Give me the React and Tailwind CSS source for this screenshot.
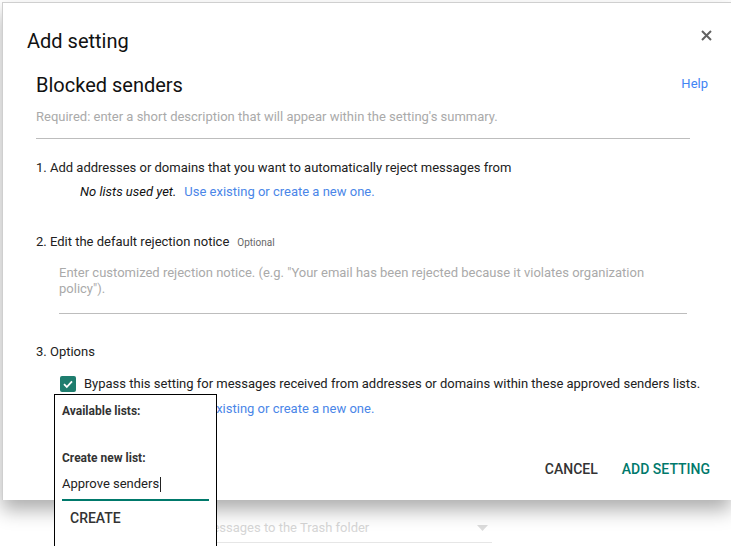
import React from "react";

export default function App() {
  const font = { fontFamily: "Roboto, 'Liberation Sans', Arial, sans-serif" };
  return (
    <div className="relative w-[731px] h-[546px] overflow-hidden bg-white text-[#212121]" style={font}>
      <div className="pt-[2px] pl-[2px]">
        {/* Dialog */}
        <div className="relative z-10 w-[729px] h-[498px] bg-white border-t border-l border-[#cfcfcf] shadow-[0_10px_18px_rgba(0,0,0,0.32)] flex flex-col">
          {/* Header */}
          <div className="flex items-center justify-between pt-[24px] pl-[24px] pr-[19px]">
            <div className="text-[20px] leading-[28px] text-[#111]">Add setting</div>
            <svg width="11" height="11" viewBox="0 0 11 11" className="mt-[-12px]">
              <path d="M1 1 L10 10 M10 1 L1 10" stroke="#616161" strokeWidth="2" />
            </svg>
          </div>

          {/* Body */}
          <div className="pl-[33px] pr-[23px] mt-[16px]">
            <div className="flex items-center justify-between">
              <div className="text-[20px] leading-[28px] text-[#111]">Blocked senders</div>
              <div className="text-[13px] leading-[20px] text-[#4285f4] mt-[-2px]">Help</div>
            </div>
            <div className="w-[654px] mt-[10px] pb-[13px] border-b border-[#bdbdbd] text-[13px] leading-[16px] text-[#aaaaaa]">
              Required: enter a short description that will appear within the setting's summary.
            </div>

            <div className="mt-[19px] text-[13px] leading-[20px]">1. Add addresses or domains that you want to automatically reject messages from</div>
            <div className="mt-[4px] pl-[44px] text-[13px] leading-[20px] flex">
              <span className="italic text-[#111]">No lists used yet.</span>
              <span className="ml-[8px] text-[#4a86e8]">Use existing or create a new one.</span>
            </div>

            <div className="mt-[30px] text-[13px] leading-[20px] flex items-baseline">
              <span>2. Edit the default rejection notice</span>
              <span className="ml-[8px] text-[10px] text-[#666]">Optional</span>
            </div>
            <div className="ml-[23px] w-[628px] mt-[12px] pb-[16px] border-b border-[#bdbdbd] text-[13px] leading-[16px] text-[#aaaaaa]">
              Enter customized rejection notice. (e.g. "Your email has been rejected because it violates organization policy").
            </div>

            <div className="mt-[28px] text-[13px] leading-[20px]">3. Options</div>
            <div className="mt-[12px] ml-[24px] flex items-center text-[13px] leading-[20px]">
              <div className="w-[16px] h-[16px] rounded-[2px] bg-[#1e7d6e] flex items-center justify-center">
                <svg width="12" height="12" viewBox="0 0 12 12">
                  <path d="M2 6.2 L4.8 9 L10 3.4" stroke="white" strokeWidth="1.8" fill="none" />
                </svg>
              </div>
              <span className="ml-[8px]">Bypass this setting for messages received from addresses or domains within these approved senders lists.</span>
            </div>
            <div className="mt-[5px] pl-[148px] text-[13px] leading-[20px] flex">
              <span className="text-[#4a86e8]">Use existing or create a new one.</span>
            </div>
          </div>

          {/* Actions */}
          <div className="mt-auto pb-[21px] pr-[21px] flex justify-end gap-[24px] text-[14px] leading-[20px] font-medium">
            <span className="text-[#333]">CANCEL</span>
            <span className="text-[#00796b]">ADD SETTING</span>
          </div>
        </div>

        {/* Background page content below the dialog */}
        <div className="ml-[164px] mt-[19px] w-[326px] flex items-center justify-between pb-[5px] border-b border-[#e6e6e6] text-[13px] leading-[18px] text-[#d6d6d6]">
          <span>Move messages to the Trash folder</span>
          <svg width="11" height="6" viewBox="0 0 11 6" className="mr-[4px]">
            <path d="M0 0 L11 0 L5.5 6 Z" fill="#dcdcdc" />
          </svg>
        </div>
      </div>

      {/* Popup list picker */}
      <div className="absolute z-20 left-[54px] top-[394px] w-[163px] h-[170px] bg-white border border-black px-[7px]">
        <div className="pt-[8px] text-[12px] leading-[16px] font-bold text-[#333]">Available lists:</div>
        <div className="mt-[31px] text-[12px] leading-[16px] font-bold text-[#333]">Create new list:</div>
        <div className="mt-[10px] pb-[7px] border-b-2 border-[#00796b] text-[13px] leading-[16px] text-[#222] flex items-center">
          <span>Approve senders</span>
          <span className="inline-block w-px h-[15px] bg-[#222] ml-[1px]"></span>
        </div>
        <div className="mt-[7px] pl-[8px] text-[14px] leading-[20px] font-medium text-[#333]">CREATE</div>
      </div>
    </div>
  );
}
